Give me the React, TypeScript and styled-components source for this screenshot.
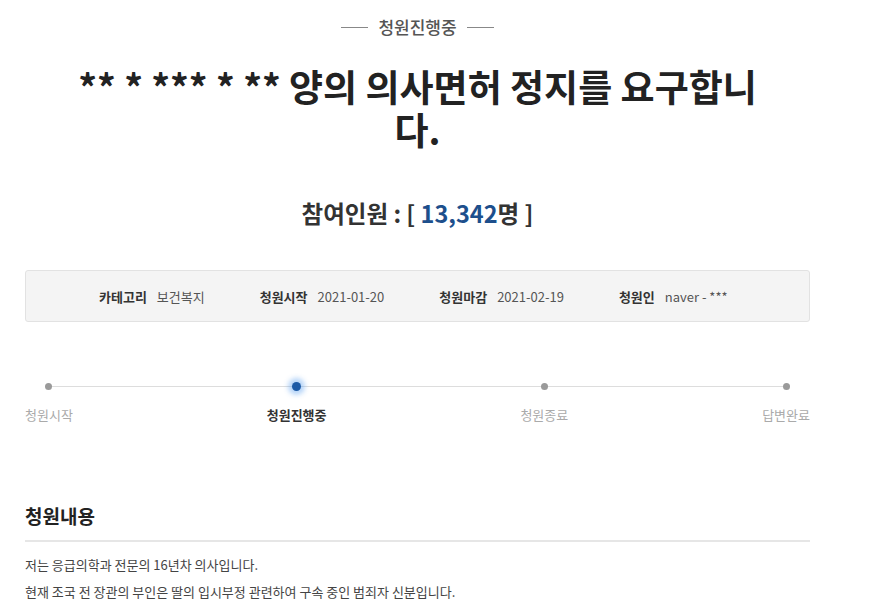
import styled, { createGlobalStyle } from "styled-components";

const GlobalStyle = createGlobalStyle`
    body {
        margin: 0;
        background: #fff;
        font-family: "Noto Sans CJK KR", "Noto Sans", sans-serif;
        color: #333;
    }
`;

const steps = [
    { label: "청원시작", active: false },
    { label: "청원진행중", active: true },
    { label: "청원종료", active: false },
    { label: "답변완료", active: false },
];

const info = [
    { label: "카테고리", value: "보건복지" },
    { label: "청원시작", value: "2021-01-20" },
    { label: "청원마감", value: "2021-02-19" },
    { label: "청원인", value: "naver - ***" },
];

export default function App() {
    return (
        <>
            <GlobalStyle />
            <Page>
                <Badge>청원진행중</Badge>
                <Title>** * *** * ** 양의 의사면허 정지를 요구합니다.</Title>
                <Count>
                    참여인원 : [ <Number>13,342</Number>명 ]
                </Count>
                <InfoBox>
                    {info.map((item) => (
                        <InfoItem key={item.label}>
                            <InfoLabel>{item.label}</InfoLabel>
                            <InfoValue>{item.value}</InfoValue>
                        </InfoItem>
                    ))}
                </InfoBox>
                <Progress>
                    {steps.map((step) => (
                        <Step key={step.label}>
                            <Dot $active={step.active} />
                            <StepLabel $active={step.active}>{step.label}</StepLabel>
                        </Step>
                    ))}
                </Progress>
                <SectionTitle>청원내용</SectionTitle>
                <Body>
                    <Paragraph>저는 응급의학과 전문의 16년차 의사입니다.</Paragraph>
                    <Paragraph>현재 조국 전 장관의 부인은 딸의 입시부정 관련하여 구속 중인 범죄자 신분입니다.</Paragraph>
                </Body>
            </Page>
        </>
    );
}

const Page = styled.div`
    width: 785px;
    margin-left: 25px;
    display: flex;
    flex-direction: column;
    align-items: center;
`;

const Badge = styled.div`
    margin-top: 16px;
    display: flex;
    align-items: center;
    gap: 10px;
    font-size: 17px;
    font-weight: 500;
    color: #555;
    line-height: 22px;
    &::before,
    &::after {
        content: "";
        width: 27px;
        height: 1px;
        background: #888;
    }
`;

const Title = styled.h1`
    margin: 27px 0 0;
    width: 700px;
    text-align: center;
    font-size: 37px;
    font-weight: 700;
    line-height: 43px;
    color: #222;
`;

const Count = styled.div`
    margin-top: 47px;
    font-size: 23.5px;
    font-weight: 700;
    color: #333;
    line-height: 30px;
`;

const Number = styled.span`
    color: #1d4f8c;
`;

const InfoBox = styled.div`
    margin-top: 42px;
    align-self: stretch;
    height: 52px;
    box-sizing: border-box;
    background: #f4f4f4;
    border: 1px solid #e2e2e2;
    border-radius: 3px;
    display: flex;
    align-items: center;
    padding-left: 73px;
    gap: 55px;
    font-size: 13px;
`;

const InfoItem = styled.div`
    display: flex;
    gap: 10px;
`;

const InfoLabel = styled.span`
    font-weight: 700;
    color: #333;
`;

const InfoValue = styled.span`
    color: #555;
`;

const Progress = styled.div`
    margin-top: 61px;
    align-self: stretch;
    position: relative;
    display: flex;
    justify-content: space-between;
    &::before {
        content: "";
        position: absolute;
        top: 3px;
        left: 25px;
        right: 27px;
        height: 1px;
        background: #ddd;
    }
`;

const Step = styled.div`
    display: flex;
    flex-direction: column;
    align-items: center;
    gap: 16px;
    position: relative;
`;

const Dot = styled.div<{ $active: boolean }>`
    width: ${(p) => (p.$active ? "9px" : "7px")};
    height: ${(p) => (p.$active ? "9px" : "7px")};
    margin-top: ${(p) => (p.$active ? "-1px" : "0")};
    margin-bottom: ${(p) => (p.$active ? "-1px" : "0")};
    border-radius: 50%;
    background: ${(p) => (p.$active ? "#1c5aa6" : "#9a9a9a")};
    box-shadow: ${(p) => (p.$active ? "0 0 5px 4px rgba(90, 160, 240, 0.45)" : "none")};
`;

const StepLabel = styled.div<{ $active: boolean }>`
    font-size: 13px;
    line-height: 18px;
    color: ${(p) => (p.$active ? "#333" : "#aaa")};
    font-weight: ${(p) => (p.$active ? 700 : 400)};
`;

const SectionTitle = styled.h2`
    margin: 79px 0 0;
    align-self: stretch;
    font-size: 19px;
    font-weight: 700;
    line-height: 26px;
    color: #222;
    padding-bottom: 11px;
    border-bottom: 2px solid #e6e6e6;
`;

const Body = styled.div`
    align-self: stretch;
    padding-top: 14px;
    display: flex;
    flex-direction: column;
    gap: 9px;
`;

const Paragraph = styled.p`
    margin: 0;
    font-size: 13px;
    line-height: 18px;
    color: #444;
`;
